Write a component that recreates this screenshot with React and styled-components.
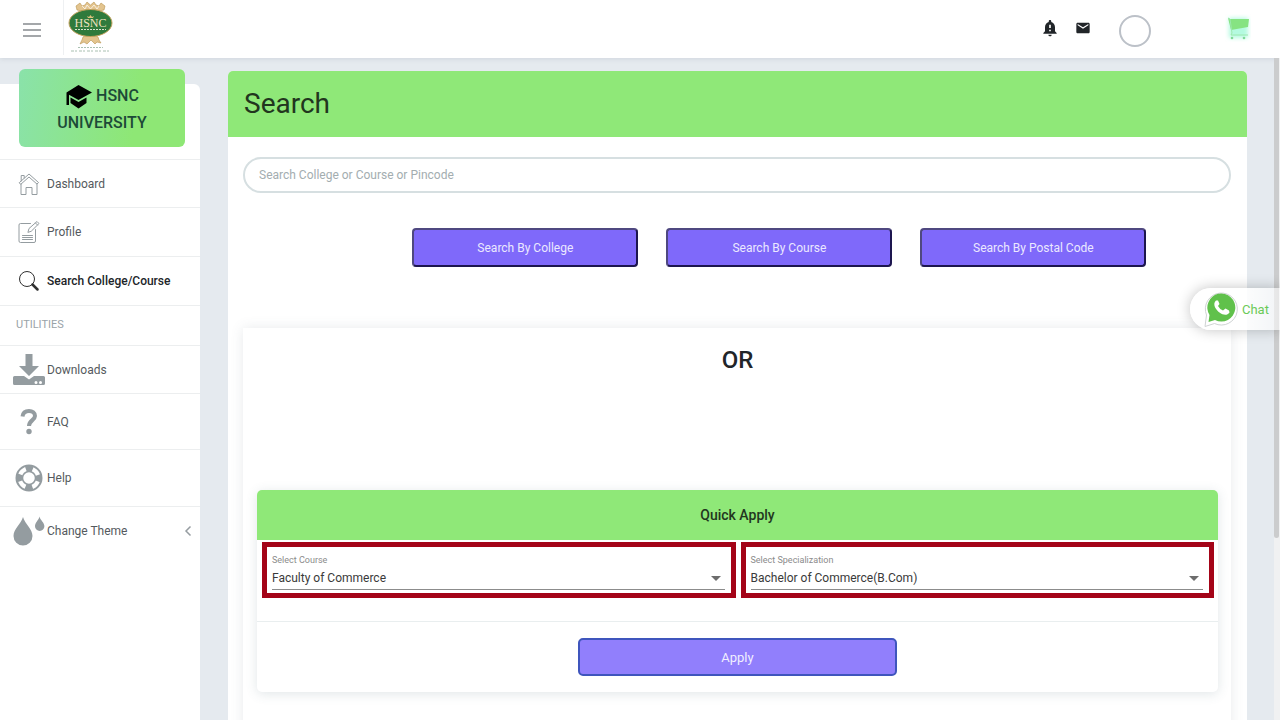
import { useState } from 'react'
import styled, { createGlobalStyle } from 'styled-components'
import { MdEmail, MdNotificationImportant } from 'react-icons/md'

const GlobalStyle=createGlobalStyle`
    *{
        box-sizing:border-box;
    }
    body{
        margin:0;
        font-family:Roboto, "Liberation Sans", sans-serif;
        font-size:12px;
        color:#343a40;
        background-color:#e5eaef;
    }
    button, input, select{
        font-family:inherit;
    }
`
const Page=styled.div`
    height:100vh;
    display:flex;
    flex-direction:column;
    overflow:hidden;
    position:relative;
`

/* top bar */
const Header=styled.header`
    flex:none;
    height:58px;
    display:flex;
    align-items:center;
    background-color:white;
    box-shadow:0 1px 5px rgba(90,100,120,0.15);
`
const MenuButton=styled.button`
    width:63px;
    height:58px;
    padding:2px 0 0 23px;
    border:none;
    background:none;
    cursor:pointer;
    svg{
        display:block;
    }
`
const LogoLink=styled.a`
    align-self:flex-start;
    height:55px;
    padding:1px 0 0 4px;
    border-left:1px solid #eef0f2;
`
const HeaderActions=styled.div`
    margin-left:auto;
    padding:0 29px 3px 0;
    display:flex;
    align-items:center;
`
const IconButton=styled.button`
    display:flex;
    padding:0;
    margin-right:${props=>props.$gap || 0}px;
    border:none;
    background:none;
    color:#212529;
    cursor:pointer;
`
const Avatar=styled.button`
    width:32px;
    height:32px;
    margin:6px 74px 0 0;
    border:2px solid #bcc1c8;
    border-radius:50%;
    background-color:white;
`

/* side menu */
const Body=styled.div`
    flex:1;
    min-height:0;
    display:flex;
`
const Sidebar=styled.aside`
    flex:none;
    width:200px;
    margin-top:26px;
    background-color:white;
    border-top-right-radius:6px;
`
const Brand=styled.a`
    display:block;
    height:78px;
    margin:-15px 15px 12px 19px;
    padding-top:13px;
    border-radius:6px;
    background:linear-gradient(100deg,#8ae2aa,#8ee775 70%);
    color:#1d4a38;
    font-size:16px;
    font-weight:500;
    line-height:27px;
    text-align:center;
    text-decoration:none;
    svg{
        vertical-align:middle;
        margin-right:4px;
    }
`
const Menu=styled.ul`
    margin:0;
    padding:0;
    list-style:none;
`
const MenuItem=styled.li`
    height:${props=>props.$height}px;
    border-top:1px solid #eceeef;
`
const MenuLink=styled.a`
    height:100%;
    display:flex;
    align-items:center;
    padding-right:8px;
    color:${props=>props.$active ? '#212529' : '#555a5e'};
    font-weight:${props=>props.$active ? 500 : 400};
    text-decoration:none;
`
const MenuIcon=styled.span`
    width:37px;
    margin-left:10px;
    display:flex;
    justify-content:center;
    color:#949ca0;
`
const MenuTitle=styled.li`
    height:40px;
    padding-left:16px;
    border-top:1px solid #eceeef;
    color:#9aa3a8;
    font-size:11px;
    line-height:37px;
`
const Arrow=styled.svg`
    margin-left:auto;
`

/* content */
const Main=styled.main`
    flex:1;
    min-width:0;
    padding:13px 27px 0 28px;
    overflow:hidden;
`
const Card=styled.section`
    min-height:100%;
    border-radius:5px 5px 0 0;
    background-color:white;
    overflow:hidden;
`
const CardTitle=styled.h1`
    margin:0;
    padding:0 16px;
    background-color:#8fe878;
    color:#22361e;
    font-size:28px;
    font-weight:400;
    line-height:66px;
`
const CardBody=styled.div`
    padding:20px 16px 0 15px;
`
const SearchInput=styled.input`
    display:block;
    width:100%;
    height:36px;
    padding:0 14px;
    border:2px solid #d6dfe1;
    border-radius:18px;
    color:#495057;
    font-size:12px;
    outline:none;
    &::placeholder{
        color:#a3adb0;
        opacity:1;
    }
`
const ButtonRow=styled.div`
    display:grid;
    grid-template-columns:repeat(12,1fr);
    column-gap:28px;
    margin:35px 0 61px;
`
const SearchButton=styled.button`
    grid-column:span 3;
    height:39px;
    border:2px solid;
    border-color:#4f4880 #1d164f #1d164f #4f4880;
    border-radius:4px;
    background-color:#7f69fa;
    color:#ebe8ff;
    font-size:12px;
    cursor:pointer;
    &:first-child{
        grid-column:3 / span 3;
    }
`
const Panel=styled.div`
    padding:14px 13px 60px 14px;
    box-shadow:0 0 12px rgba(80,90,110,0.13);
`
const Or=styled.h2`
    margin:0 0 112px;
    color:#212529;
    font-size:24px;
    font-weight:500;
    line-height:36px;
    text-align:center;
`
const ApplyCard=styled.form`
    border-radius:5px;
    box-shadow:0 2px 12px rgba(70,100,110,0.16);
    overflow:hidden;
`
const ApplyTitle=styled.h3`
    margin:0;
    background-color:#8fe878;
    color:#22361e;
    font-size:14px;
    font-weight:500;
    line-height:50px;
    text-align:center;
`
const Fields=styled.div`
    display:grid;
    grid-template-columns:1fr 1fr;
    gap:5px;
    padding:2px 4px 23px 5px;
`
const Field=styled.div`
    position:relative;
    height:56px;
    padding:7px 6px 0 5px;
    border:5px solid #a40418;
`
const Label=styled.label`
    display:block;
    color:#8b8b8b;
    font-size:9px;
    line-height:12px;
`
const Select=styled.select`
    display:block;
    width:100%;
    height:24px;
    padding:0;
    border:none;
    border-bottom:1px solid #8c8c8c;
    border-radius:0;
    background:none;
    appearance:none;
    color:#3a3a3a;
    font-size:12px;
    outline:none;
`
const Caret=styled.svg`
    position:absolute;
    right:10px;
    top:29px;
    pointer-events:none;
`
const ApplyFooter=styled.div`
    display:flex;
    justify-content:center;
    padding:16px 0;
    border-top:1px solid #e9eeef;
`
const ApplyButton=styled.button`
    width:33.2%;
    height:38px;
    border:2px solid #3f55bd;
    border-radius:5px;
    background-color:#917ffc;
    color:#f0eeff;
    font-size:13px;
    cursor:pointer;
`
const ScrollTrack=styled.div`
    flex:none;
    width:6px;
    background-color:#f0f1f2;
`
const ScrollThumb=styled.div`
    width:5px;
    height:72.5%;
    border-radius:0 0 3px 3px;
    background-color:#cbcccd;
`
const Chat=styled.a`
    position:absolute;
    right:0;
    top:288px;
    width:90px;
    height:42px;
    display:flex;
    align-items:center;
    gap:4px;
    padding-left:14px;
    border-radius:21px 0 0 21px;
    background:linear-gradient(90deg,white 50%,rgba(255,255,255,0.5));
    box-shadow:0 0 14px rgba(0,0,0,0.24);
    color:#6bca58;
    font-size:13px;
    text-decoration:none;
`

const stroke={fill:'none',stroke:'currentColor',strokeLinejoin:'round',strokeLinecap:'round'}

const HomeIcon=()=>(
    <svg width="22" height="24" viewBox="0 0 22 24" {...stroke}>
        <path d="M1.500 10.500 11 2l9.500 8.500-1.500 1.600L11 5l-8 7.100z"/>
        <path d="M3 12v10.500h5v-7h6v7h5V12M3.200 9V3.500h3V6"/>
    </svg>
)
const NoteIcon=()=>(
    <svg width="22" height="24" viewBox="0 0 22 24" {...stroke}>
        <path d="M12.500 3.500H2.500Q1 3.500 1 5v16q0 1.500 1.500 1.500H16q1.500 0 1.500-1.500V9.500"/>
        <path d="m10 12 1-3.500 8-7 2 2-7.500 7.500zM17.500 3l2 2M4.500 15.500h10M4.500 17.500h10M4.500 19.500h10"/>
    </svg>
)
const SearchIcon=()=>(
    <svg width="22" height="22" viewBox="0 0 22 22" fill="none" stroke="#303030">
        <circle cx="9" cy="9" r="7.500"/>
        <path d="m14.500 14.500 5 5" strokeWidth="2.500" strokeLinecap="round"/>
    </svg>
)
const DownloadIcon=()=>(
    <svg width="32" height="32" viewBox="0 0 32 32" fill="currentColor">
        <path d="M12.500 0h7v12H26L16 22 6 12h6.500z"/>
        <path fillRule="evenodd" d="M1.500 22H11l5 3.500 5-3.500h9.500q1.500 0 1.500 1.500v6q0 1.500-1.500 1.500h-29Q0 31 0 29.500v-6Q0 22 1.500 22zM23 27a1 1 0 1 0 0 3 1 1 0 0 0 0-3zm4.500 0a1 1 0 1 0 0 3 1 1 0 0 0 0-3z"/>
    </svg>
)
const QuestionIcon=()=>(
    <svg width="18" height="28" viewBox="0 0 18 28">
        <path d="M2.500 8.500c.5-4 3-5.500 6.500-5.500s6 2 6 5c0 4-6 4.500-6 10" fill="none" stroke="currentColor" strokeWidth="4"/>
        <circle cx="9" cy="23.500" r="2.700" fill="currentColor"/>
    </svg>
)
const HelpIcon=()=>(
    <svg width="28" height="28" viewBox="0 0 28 28" fill="none" stroke="currentColor">
        <circle cx="14" cy="14" r="12.500" strokeWidth="2"/>
        <circle cx="14" cy="14" r="6.500" strokeWidth="1.500"/>
        <circle cx="14" cy="14" r="9.500" strokeWidth="6" strokeDasharray="7 7.920" strokeDashoffset="3.500"/>
    </svg>
)
const DropsIcon=()=>(
    <svg width="32" height="30" viewBox="0 0 32 30" fill="currentColor">
        <path d="M10 1C8 8 .500 13 .500 20a9.500 9.500 0 0 0 19 0C19.500 13 12 8 10 1zM26.500.500c-1 4-4.500 6-4.500 9.700a4.700 4.700 0 0 0 9.400 0c0-3.700-4-5.700-4.900-9.700z"/>
    </svg>
)
const CapIcon=()=>(
    <svg width="27" height="24" viewBox="0 0 27 24">
        <path d="M13.500 0 27 7.500 13.500 15 4 9.700V20H1.500V7.500z"/>
        <path d="m5.500 12.500 8 4.500 8-4.500V18l-8 5.500-8-5.500z"/>
    </svg>
)
const Logo=()=>(
    <svg width="45" height="52" viewBox="0 0 45 52">
        <g fill="#e3c48e" stroke="#b8934f" strokeWidth=".6">
            <path d="M9 9 8 5l4-3 2 3 3-1 2-3 3.500 3L26 1l2 3 3 1 2-3 4 3-1 4-5 1H14z"/>
            <path d="m18 34 4.500 1 4.500-1 3 2 1 3 2 3-4-1-2 2-4-4-4 4-3-2-4 2 2-4 1-3z"/>
        </g>
        <path d="m14 5 3 3 2-4 3.500 4L26 4l3 4 2-3" fill="none" stroke="white" strokeWidth=".7"/>
        <ellipse cx="22.500" cy="22" rx="21.500" ry="13.500" fill="#2f7a3c" stroke="#c5a25d"/>
        <path d="m19 15 1 2h5l1-2-2 1-1.500-2-1.500 2z" fill="#e0c07d"/>
        <text x="22.500" y="26" textAnchor="middle" fill="#f0e2c0" fontFamily="Liberation Serif, serif" fontSize="12">HSNC</text>
        <path d="M7 28.500h31" stroke="#d9e3cf" strokeDasharray="2 1"/>
        <path d="M10 46.500h25" stroke="#a9c0b1" strokeDasharray="2 1"/>
        <path d="M3 50h39" stroke="#a9c0b1" strokeDasharray="3 1 2 2"/>
    </svg>
)
const CartIcon=()=>(
    <svg width="26" height="28" viewBox="0 0 26 28">
        <defs><filter id="glow" x="-50%" y="-50%" width="200%" height="200%"><feGaussianBlur stdDeviation="2"/></filter></defs>
        <path d="M4 4h19v20H4z" fill="#b4fae0" filter="url(#glow)"/>
        <path d="m3 4 2 1h19l-1 8-17 3z" fill="#86e382"/>
        <path d="m3 4 2 1 2 14-1 2h17" fill="none" stroke="#9be8ae"/>
        <circle cx="7" cy="24" r="1.300" fill="#80d998"/>
        <circle cx="19" cy="24" r="1.300" fill="#80d998"/>
    </svg>
)
const ChatIcon=()=>(
    <svg width="34" height="36" viewBox="0 0 34 36">
        <path d="M1 35.500 2.500 24a16 16 0 1 1 8 8.500z" fill="white" stroke="#cfd3d3"/>
        <path d="m4.500 31 1-7a14 14 0 1 1 5.500 5z" fill="#60c14b"/>
        <path d="M12 9.500c-4 3.500 0 9.500 3.500 12s7.500 3.500 10 0l-.5-2-3.500-2-2.500 2q-3.500-1.500-5-4.500l1.500-2-1.500-3.500z" fill="white"/>
    </svg>
)

const mainItems=[
    {name:'Dashboard',icon:<HomeIcon/>,height:48},
    {name:'Profile',icon:<NoteIcon/>,height:49},
    {name:'Search College/Course',icon:<SearchIcon/>,height:49,active:true},
]
const utilityItems=[
    {name:'Downloads',icon:<DownloadIcon/>,height:48},
    {name:'FAQ',icon:<QuestionIcon/>,height:56},
    {name:'Help',icon:<HelpIcon/>,height:57},
    {name:'Change Theme',icon:<DropsIcon/>,height:48,arrow:true},
]

const Item = ({item}) => (
    <MenuItem $height={item.height}>
        <MenuLink href="#" $active={item.active}>
            <MenuIcon>{item.icon}</MenuIcon>
            {item.name}
            {item.arrow && <Arrow width="8" height="12" viewBox="0 0 8 12" fill="none" stroke="#969da1" strokeWidth="1.500"><path d="M6.500 1.500 2 6l4.500 4.500"/></Arrow>}
        </MenuLink>
    </MenuItem>
)

const SelectField = ({id,label,options}) => (
    <Field>
        <Label htmlFor={id}>{label}</Label>
        <Select id={id}>
            {options.map(option=><option key={option}>{option}</option>)}
        </Select>
        <Caret width="10" height="5" viewBox="0 0 10 5"><path d="M0 0h10L5 5z" fill="#6d6d6d"/></Caret>
    </Field>
)

const App = () => {
    const [search,setSearch]=useState('');
  return (
    <Page>
        <GlobalStyle/>
        <Header>
            <MenuButton aria-label="Menu">
                <svg width="18" height="14" viewBox="0 0 18 14" stroke="#868b8f" strokeWidth="1.500"><path d="M0 1h18M0 7h18M0 13h18"/></svg>
            </MenuButton>
            <LogoLink href="#" aria-label="Home"><Logo/></LogoLink>
            <HeaderActions>
                <IconButton aria-label="Notifications" $gap={15}><MdNotificationImportant size={20}/></IconButton>
                <IconButton aria-label="Messages" $gap={28}><MdEmail size={16}/></IconButton>
                <Avatar aria-label="Account"/>
                <IconButton aria-label="Cart"><CartIcon/></IconButton>
            </HeaderActions>
        </Header>
        <Body>
            <Sidebar>
                <Brand href="#"><CapIcon/>HSNC<br/>UNIVERSITY</Brand>
                <Menu>
                    {mainItems.map(item=><Item key={item.name} item={item}/>)}
                    <MenuTitle>UTILITIES</MenuTitle>
                    {utilityItems.map(item=><Item key={item.name} item={item}/>)}
                </Menu>
            </Sidebar>
            <Main>
                <Card>
                    <CardTitle>Search</CardTitle>
                    <CardBody>
                        <SearchInput
                            aria-label="Search"
                            placeholder="Search College or Course or Pincode"
                            value={search}
                            onChange={e=>setSearch(e.target.value)}
                        />
                        <ButtonRow>
                            <SearchButton>Search By College</SearchButton>
                            <SearchButton>Search By Course</SearchButton>
                            <SearchButton>Search By Postal Code</SearchButton>
                        </ButtonRow>
                        <Panel>
                            <Or>OR</Or>
                            <ApplyCard onSubmit={e=>e.preventDefault()}>
                                <ApplyTitle>Quick Apply</ApplyTitle>
                                <Fields>
                                    <SelectField id="course" label="Select Course" options={['Faculty of Commerce']}/>
                                    <SelectField id="specialization" label="Select Specialization" options={['Bachelor of Commerce(B.Com)']}/>
                                </Fields>
                                <ApplyFooter>
                                    <ApplyButton>Apply</ApplyButton>
                                </ApplyFooter>
                            </ApplyCard>
                        </Panel>
                    </CardBody>
                </Card>
            </Main>
            <ScrollTrack><ScrollThumb/></ScrollTrack>
        </Body>
        <Chat href="#"><ChatIcon/>Chat</Chat>
    </Page>
  )
}

export default App
